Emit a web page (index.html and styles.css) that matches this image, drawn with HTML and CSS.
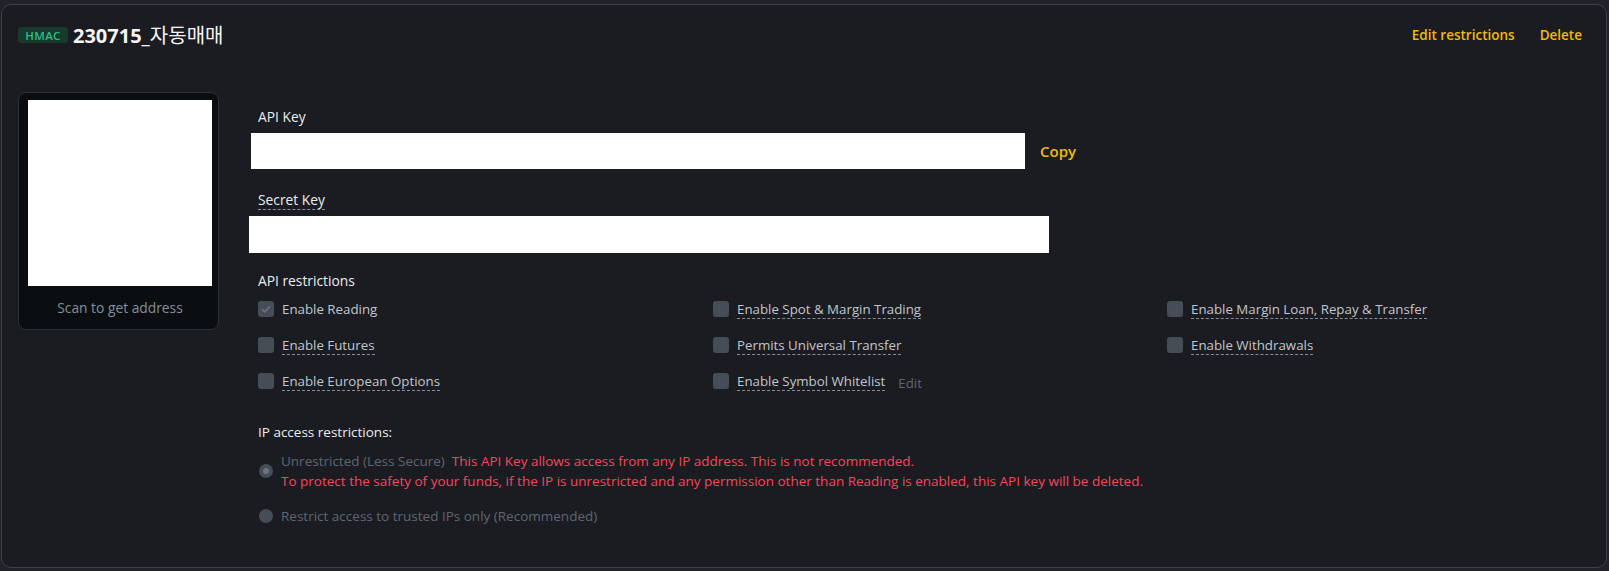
FILE: index.html
```html
<!DOCTYPE html>
<html lang="en">
<head>
<meta charset="utf-8">
<title>API Key</title>
<link rel="stylesheet" href="styles.css">
</head>
<body>
<div class="page">
  <div class="card">
    <div class="head">
      <div class="title-wrap">
        <span class="badge">HMAC</span>
        <span class="title">230715_<span class="ko">자동매매</span></span>
      </div>
      <div class="actions">
        <span class="action">Edit restrictions</span>
        <span class="action">Delete</span>
      </div>
    </div>
    <div class="body">
      <div class="qr">
        <div class="qr-img"></div>
        <div class="qr-cap">Scan to get address</div>
      </div>
      <div class="form">
        <div class="lbl">API Key</div>
        <div class="key-row">
          <div class="field field-api"></div>
          <span class="copy">Copy</span>
        </div>
        <div class="lbl lbl-secret"><span class="dash">Secret Key</span></div>
        <div class="field field-secret"></div>
        <div class="lbl lbl-restr">API restrictions</div>
        <div class="perm-grid">
          <div class="perm"><span class="cb checked"><svg viewBox="0 0 16 16" width="16" height="16"><path d="M4 8.2l2.6 2.6L12 5.4" fill="none" stroke="#6b7381" stroke-width="1.6"/></svg></span><span class="plain">Enable Reading</span></div>
          <div class="perm"><span class="cb"></span><span class="dash">Enable Spot &amp; Margin Trading</span></div>
          <div class="perm"><span class="cb"></span><span class="dash">Enable Margin Loan, Repay &amp; Transfer</span></div>
          <div class="perm"><span class="cb"></span><span class="dash">Enable Futures</span></div>
          <div class="perm"><span class="cb"></span><span class="dash">Permits Universal Transfer</span></div>
          <div class="perm"><span class="cb"></span><span class="dash">Enable Withdrawals</span></div>
          <div class="perm"><span class="cb"></span><span class="dash">Enable European Options</span></div>
          <div class="perm"><span class="cb"></span><span class="dash">Enable Symbol Whitelist</span><span class="edit">Edit</span></div>
        </div>
        <div class="lbl lbl-ip">IP access restrictions:</div>
        <div class="ip-opt ip-1">
          <span class="radio on"></span>
          <div class="ip-text">
            <div><span class="muted">Unrestricted (Less Secure)</span><span class="red red-first">This API Key allows access from any IP address. This is not recommended.</span></div>
            <div class="red">To protect the safety of your funds, if the IP is unrestricted and any permission other than Reading is enabled, this API key will be deleted.</div>
          </div>
        </div>
        <div class="ip-opt ip-2">
          <span class="radio"></span>
          <span class="muted">Restrict access to trusted IPs only (Recommended)</span>
        </div>
      </div>
    </div>
  </div>
</div>
</body>
</html>
```

FILE: styles.css
```css
* { box-sizing: border-box; }
html, body { margin: 0; padding: 0; }
body {
  background: #202228;
  font-family: "Open Sans", "Noto Sans", sans-serif;
  color: #eaecef;
}
.page {
  padding: 4px 2px 4px 1px;
}
.card {
  background: #1b1c21;
  border: 1px solid #3c4048;
  border-radius: 10px;
  padding: 0 24px 0 16px;
  height: 564px;
}
.head {
  display: flex;
  justify-content: space-between;
  align-items: center;
  padding-top: 20px;
  height: 40px;
}
.title-wrap {
  display: flex;
  align-items: center;
  gap: 5px;
}
.badge {
  display: inline-flex;
  align-items: center;
  justify-content: center;
  width: 50px;
  height: 16px;
  border-radius: 3px;
  background: #173a2d;
  color: #2ebd85;
  font-size: 11.5px;
  font-weight: 600;
  letter-spacing: 0.3px;
}
.title {
  font-size: 20px;
  font-weight: 700;
  line-height: 20px;
  color: #f5f5f5;
}
.ko {
  font-family: "Noto Sans CJK KR", sans-serif;
  font-weight: 400;
}
.actions {
  display: flex;
  gap: 25px;
}
.action {
  color: #f0b90b;
  font-size: 13.5px;
  font-weight: 600;
}
.body {
  display: flex;
  margin-top: 47px;
}
.qr {
  width: 201px;
  height: 238px;
  background: #0b0e11;
  border: 1px solid #2b3139;
  border-radius: 8px;
  padding: 7px 0 0 9px;
}
.qr-img {
  width: 184px;
  height: 186px;
  background: #ffffff;
}
.qr-cap {
  margin-top: 13px;
  width: 184px;
  text-align: center;
  font-size: 13.8px;
  line-height: 18px;
  color: #848e9c;
}
.form {
  margin-left: 32px;
  padding-top: 16px;
  flex: 1;
}
.lbl {
  margin-left: 7px;
  font-size: 13.8px;
  font-weight: 500;
  line-height: 18px;
  color: #eaecef;
}
.key-row {
  display: flex;
  align-items: center;
  margin-top: 7px;
}
.field {
  background: #ffffff;
}
.field-api {
  width: 774px;
  height: 36px;
}
.copy {
  margin-left: 15px;
  color: #f0b90b;
  font-size: 15px;
  font-weight: 600;
}
.lbl-secret {
  margin-top: 22px;
}
.dash {
  display: inline-block;
  border-bottom: 1px dashed #848e9c;
  line-height: 18px;
}
.field-secret {
  margin-top: 6px;
  margin-left: -2px;
  width: 800px;
  height: 37px;
}
.lbl-restr {
  margin-top: 19px;
}
.perm-grid {
  margin-top: 1px;
  margin-left: 7px;
  display: grid;
  grid-template-columns: 455px 454px 1fr;
  grid-auto-rows: 36px;
}
.perm {
  display: flex;
  align-items: center;
  gap: 8px;
  font-size: 13.3px;
  color: #c1c6ce;
}
.perm .dash {
  margin-top: 1px;
}
.plain {
  line-height: 18px;
}
.cb {
  width: 16px;
  height: 16px;
  border-radius: 3px;
  background: #474d57;
  flex: none;
}
.cb svg { display: block; }
.edit {
  margin-left: 5px;
  margin-top: 3px;
  color: #5e6673;
  font-size: 13.3px;
}
.lbl-ip {
  margin-top: 24px;
  font-size: 13.5px;
}
.ip-opt {
  display: flex;
  align-items: center;
  gap: 8px;
  margin-left: 8px;
  font-size: 13.5px;
  line-height: 20px;
}
.ip-1 { margin-top: 10px; }
.ip-2 { margin-top: 15px; }
.radio {
  width: 14px;
  height: 14px;
  border-radius: 50%;
  background: #474d57;
  flex: none;
  display: flex;
  align-items: center;
  justify-content: center;
}
.radio.on::after {
  content: "";
  width: 6px;
  height: 6px;
  border-radius: 50%;
  background: #6b7381;
}
.muted { color: #5e6673; }
.red { color: #f6465d; }
.red-first { margin-left: 7px; }
```
